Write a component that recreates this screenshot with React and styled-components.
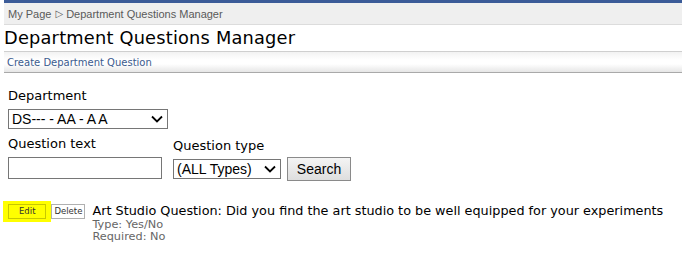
import React from 'react'
import styled, { createGlobalStyle } from 'styled-components'

const GlobalStyle = createGlobalStyle`
    body {
        margin: 0;
        background: #fff;
        font-family: "DejaVu Sans", Verdana, sans-serif;
    }
`

const Page = styled.div`
    width: 682px;
    height: 253px;
    overflow: hidden;
`

const Header = styled.div`
    margin-left: 4px;
    border-top: 3px solid #3b5b98;
`

const Breadcrumb = styled.div`
    height: 21px;
    background: #efefef;
    border-bottom: 1px solid #dcdcdc;
    display: flex;
    align-items: center;
    padding-left: 4px;
    font-family: "Liberation Sans", Arial, sans-serif;
    font-size: 11px;
    color: #5a5a5a;
`

const Arrow = styled.span`
    margin: 0 3px 0 4px;
    font-family: "DejaVu Sans", sans-serif;
    font-size: 10px;
`

const Title = styled.h1`
    margin: 0;
    padding: 1px 0 0 4px;
    height: 25px;
    font-weight: normal;
    font-size: 17.8px;
    line-height: 24px;
    color: #000;
    letter-spacing: 0.2px;
`

const ActionBar = styled.div`
    margin-left: 4px;
    height: 20px;
    border-top: 1px solid #cfcfcf;
    border-bottom: 1px solid #a9a9a9;
    background: linear-gradient(#f2f2f2, #fff 40%, #fff 60%, #e6e6e6);
    display: flex;
    align-items: center;
    padding-left: 3px;
`

const ActionLink = styled.a`
    font-size: 10px;
    color: #3b5b8e;
    text-decoration: none;
`

const Form = styled.div`
    padding: 15px 0 0 8px;
`

const Label = styled.div`
    font-size: 13px;
    color: #000;
    height: 18px;
    margin-bottom: 3px;
`

const Select = styled.div`
    width: ${props => props.width}px;
    height: 18px;
    border: 1px solid #767676;
    display: flex;
    align-items: center;
    justify-content: space-between;
    padding: 0 4px 0 3px;
    box-sizing: content-box;
    font-family: "Liberation Sans", Arial, sans-serif;
    font-size: 14px;
    color: #000;
`

const Row = styled.div`
    display: flex;
    align-items: flex-end;
    margin-top: 7px;
`

const Field = styled.div`
    margin-right: ${props => props.gap}px;
`

const Input = styled.div`
    width: 152px;
    height: 20px;
    border: 1px solid #767676;
    margin-top: 1px;
`

const Button = styled.div`
    margin-left: 6px;
    margin-bottom: -2px;
    width: 62px;
    height: 22px;
    border: 1px solid #8a8a8a;
    background: linear-gradient(#f4f4f4, #dedede);
    display: flex;
    align-items: center;
    justify-content: center;
    font-family: "Liberation Sans", Arial, sans-serif;
    font-size: 14px;
    color: #000;
`

const Item = styled.div`
    display: flex;
    align-items: flex-start;
    margin-top: 22px;
    padding-left: 3px;
`

const Highlight = styled.div`
    background: #ffff00;
    padding: 3px 5px;
`

const SmallButton = styled.div`
    height: 13px;
    padding: 0 ${props => props.pad}px;
    border: 1px solid ${props => props.highlight ? '#c8c800' : '#b0b0b0'};
    background: ${props => props.highlight ? '#ffff00' : '#fff'};
    font-size: 8.5px;
    line-height: 13px;
    color: #333;
    margin-top: ${props => props.highlight ? 0 : 3}px;
`

const Details = styled.div`
    margin-left: 7px;
    margin-top: 1px;
`

const QuestionText = styled.div`
    font-size: 12.8px;
    color: #000;
    line-height: 17px;
`

const Meta = styled.div`
    font-size: 11.3px;
    color: #666;
    line-height: 12px;
`

const Chevron = () => (
    <svg width="12" height="8" viewBox="0 0 12 8">
        <path d="M1 1.5 L6 6.5 L11 1.5" fill="none" stroke="#000" strokeWidth="1.8" />
    </svg>
)

const App = () => {
    return (
        <Page>
            <GlobalStyle />
            <Header>
                <Breadcrumb>
                    My Page<Arrow>▷</Arrow>Department Questions Manager
                </Breadcrumb>
            </Header>
            <Title>Department Questions Manager</Title>
            <ActionBar>
                <ActionLink>Create Department Question</ActionLink>
            </ActionBar>
            <Form>
                <Label>Department</Label>
                <Select width={151}>
                    <span>DS--- - AA - A A</span>
                    <Chevron />
                </Select>
                <Row>
                    <Field gap={11}>
                        <Label>Question text</Label>
                        <Input />
                    </Field>
                    <Field gap={0}>
                        <Label>Question type</Label>
                        <Select width={99}>
                            <span>(ALL Types)</span>
                            <Chevron />
                        </Select>
                    </Field>
                    <Button>Search</Button>
                </Row>
            </Form>
            <Item>
                <Highlight>
                    <SmallButton highlight pad={10}>Edit</SmallButton>
                </Highlight>
                <SmallButton pad={2}>Delete</SmallButton>
                <Details>
                    <QuestionText>Art Studio Question: Did you find the art studio to be well equipped for your experiments</QuestionText>
                    <Meta>Type: Yes/No</Meta>
                    <Meta>Required: No</Meta>
                </Details>
            </Item>
        </Page>
    )
}

export default App
